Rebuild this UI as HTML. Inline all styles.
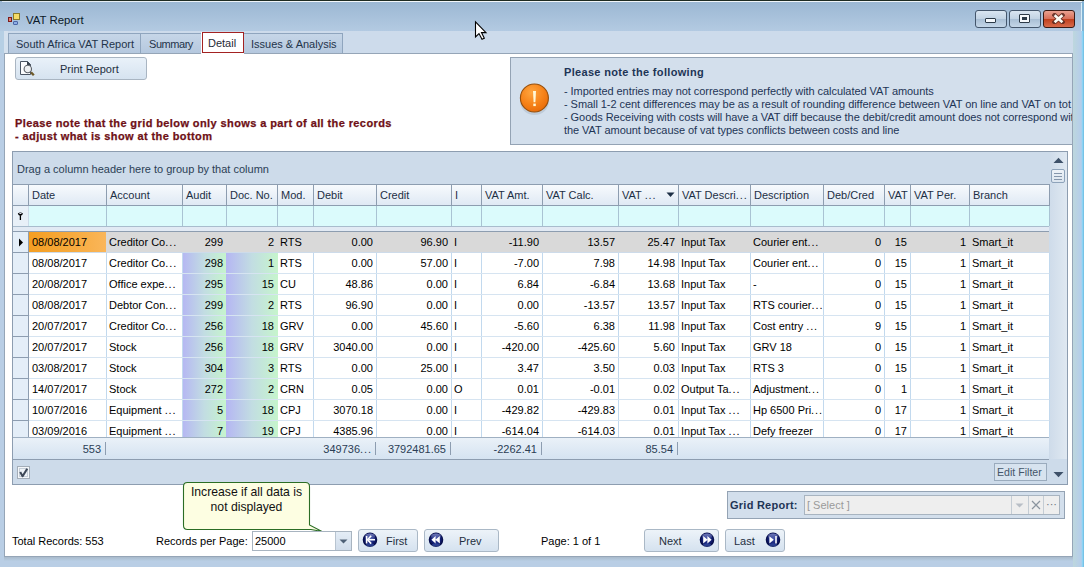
<!DOCTYPE html>
<html><head><meta charset="utf-8">
<style>
*{box-sizing:border-box;margin:0;padding:0}
html,body{width:1084px;height:567px;overflow:hidden}
body{position:relative;background:#b9cee5;font-family:"Liberation Sans",sans-serif;font-size:11px;color:#000}
.a{position:absolute}
.t{white-space:nowrap;position:absolute}
#topline{left:0;top:0;width:1084px;height:1px;background:#1e2b22}
#title{left:0;top:1px;width:1084px;height:30px;background:linear-gradient(#9bb7d3,#b3cae2)}
#tabstrip{left:0;top:31px;width:1084px;height:22px;background:#cddbeb}
.tab{top:33px;height:20px;border:1px solid #8fa5be;border-bottom:none;background:linear-gradient(#c6d6e8,#b5c8de);color:#1f344a}
.tab span{position:absolute;top:4px;white-space:nowrap}
#panel{left:4px;top:53px;width:1069px;height:504px;background:#fff;border:1px solid #95a5b7}
.nb{top:529px;height:23px;border:1px solid #aab8c6;border-radius:3px;background:linear-gradient(#edf3f9,#d5e2ef)}
.wbtn{top:10px;height:18px;border:1px solid #44566c;border-radius:3px}
</style></head><body>
<div class="a" id="topline"></div>
<div class="a" id="title"></div>
<div class="a" style="left:2px;top:1px;width:1080px;height:1px;background:linear-gradient(90deg,#dfe9f2,#f4f8fb 30%,#eef4f8)"></div>
<div class="a" id="tabstrip"></div>
<div class="a" style="left:0;top:31px;width:4px;height:22px;background:#b6cfe4"></div><div class="a" style="left:4px;top:31px;width:4px;height:22px;background:#d5e1ee"></div>
<!-- title icon -->
<div class="a" style="left:13px;top:13px;width:7px;height:7px;background:#f6dc66;border:1px solid #8a7a28"></div>
<div class="a" style="left:8px;top:17px;width:4px;height:5px;background:#e0806e;border:1px solid #7e1a1a"></div>
<div class="a" style="left:13px;top:21px;width:5px;height:4px;background:#8eaee6;border:1px solid #4a66a6;border-radius:1px"></div>
<div class="t" style="left:26px;top:14px;font-size:11.4px;color:#0c1a28">VAT Report</div>
<!-- window buttons -->
<div class="a wbtn" style="left:975px;width:32px;background:linear-gradient(#d9e5f1 0%,#c2d3e4 48%,#a9bfd5 52%,#c4d6e8 100%)"></div>
<div class="a wbtn" style="left:1009px;width:32px;background:linear-gradient(#d9e5f1 0%,#c2d3e4 48%,#a9bfd5 52%,#c4d6e8 100%)"></div>
<div class="a wbtn" style="left:1043px;width:32px;border-color:#3a1a14;background:linear-gradient(#e9a190 0%,#d8705a 48%,#c0401e 52%,#d86a4a 100%)"></div>
<div class="a" style="left:985px;top:18px;width:11px;height:5px;background:#f4f8fc;border:1px solid #2c3a48;border-radius:1px"></div>
<div class="a" style="left:1019px;top:14px;width:11px;height:9px;background:#f4f8fc;border:1px solid #2c3a48;border-radius:1px"></div>
<div class="a" style="left:1022px;top:17px;width:5px;height:3px;background:#2c3a48"></div>
<svg class="a" style="left:1052px;top:13px" width="13" height="11" viewBox="0 0 13 11"><path d="M2.6 2.2 L10.4 9.2 M10.4 2.2 L2.6 9.2" stroke="#5a2a20" stroke-width="4.4" stroke-linecap="square" opacity="0.85"/><path d="M2.6 2.2 L10.4 9.2 M10.4 2.2 L2.6 9.2" stroke="#fbfbf4" stroke-width="2.6"/></svg>
<div class="a" style="left:1081px;top:3px;width:1px;height:28px;background:#d8eef8"></div><div class="a" style="left:1082px;top:2px;width:2px;height:29px;background:#7fb2d4"></div>
<!-- cursor -->
<svg class="a" style="left:474px;top:20px" width="14" height="21" viewBox="0 0 14 21"><path d="M1.5 1.8 L1.5 17 L5 13.6 L8 19.2 L10.3 18.2 L7.5 12.6 L12 12.6 Z" fill="#fff" stroke="#000" stroke-width="1.1" stroke-linejoin="miter"/></svg>

<!-- tabs -->
<div class="a tab" style="left:8px;width:133px"><span style="left:7px">South Africa VAT Report</span></div>
<div class="a tab" style="left:140px;width:62px"><span style="left:8px;letter-spacing:-0.45px">Summary</span></div>
<div class="a tab" style="left:243px;width:100px"><span style="left:7px">Issues &amp; Analysis</span></div>

<div class="a" id="panel"></div>
<div class="a" style="left:4px;top:557px;width:1069px;height:4px;background:linear-gradient(#a9bacb,#b8cee4)"></div>
<div class="a" style="left:1073px;top:31px;width:11px;height:536px;background:linear-gradient(90deg,#bdd7dd,#b8d0e6 50%,#b4cdea 75%,#8fd6f6 85%,#6cb9e0)"></div>
<div class="a" style="left:201px;top:32px;width:43px;height:22px;background:#fff"></div><div class="a" style="left:202px;top:32px;width:42px;height:21px;background:#fff;border:1px solid #a32222"><span class="t" style="left:5px;top:4px;color:#1f2a36">Detail</span></div>

<!-- print report button -->
<div class="a" style="left:15px;top:57px;width:132px;height:23px;border:1px solid #a9b5c2;border-radius:3px;background:linear-gradient(#e9f1f9,#d6e3f0)"></div>
<svg class="a" style="left:19px;top:60px" width="16" height="17" viewBox="0 0 16 17">
<path d="M1.5 1.5 H8.5 L11.5 4.5 V14.5 H1.5 Z" fill="#fbfcfe" stroke="#4a5462" stroke-width="1"/>
<path d="M8 1 L12 5 H8 Z" fill="#38424e"/>
<path d="M12 12.2 L14.8 15.2" stroke="#6e5a2a" stroke-width="2.4"/>
<circle cx="8.8" cy="9" r="3.7" fill="#eef0f2" stroke="#5a5f66" stroke-width="1.1"/>
</svg>
<div class="t" style="left:60px;top:63px;color:#1f2f40">Print Report</div>
<!-- red notice -->
<div class="t" style="left:15px;top:117px;font-weight:bold;font-size:11px;letter-spacing:0.4px;line-height:13px;color:#6e1016;-webkit-text-stroke:0.25px #6e1016">Please note that the grid below only shows a part of all the records<br>- adjust what is show at the bottom</div>
<!-- notes box -->
<div class="a" style="left:0;top:0;width:1072px;height:200px;overflow:hidden">
<div class="a" style="left:510px;top:57px;width:580px;height:88px;background:#d3dfec;border:1px solid #94a3b4"></div>
<svg class="a" style="left:518px;top:82px" width="34" height="36" viewBox="0 0 34 36">
<defs><radialGradient id="og" cx="40%" cy="30%" r="75%"><stop offset="0" stop-color="#ffa640"/><stop offset="0.55" stop-color="#f7841a"/><stop offset="1" stop-color="#e86a08"/></radialGradient></defs>
<ellipse cx="16.5" cy="19" rx="14.5" ry="14" fill="#8a98a8" opacity="0.28"/>
<circle cx="16.4" cy="16" r="14" fill="url(#og)" stroke="#95500e" stroke-width="1.1"/>
<path d="M15 9 H18 L17.4 20.2 H15.6 Z" fill="#fff8d8"/>
<rect x="15.3" y="21.6" width="2.5" height="2.5" fill="#fff8d8"/>
</svg>
<div class="t" style="left:564px;top:66px;font-weight:bold;font-size:11px;letter-spacing:0.32px;color:#1e3556">Please note the following</div>
<div class="t" style="left:564px;top:85px;line-height:12.9px;letter-spacing:-0.06px;color:#1e3556">- Imported entries may not correspond perfectly with calculated VAT amounts<br>- Small 1-2 cent differences may be as a result of rounding difference between VAT on line and VAT on tot<br>- Goods Receiving with costs will have a VAT diff because the debit/credit amount does not correspond wit<br>the VAT amount because of vat types conflicts between costs and line</div>
</div>

<div class="a" style="left:12px;top:151px;width:1056px;height:334px;background:#cddbea;border:1px solid #8d9db0"></div>
<div class="t" style="left:17px;top:163px;color:#2b3e55">Drag a column header here to group by that column</div>
<div class="a" style="left:1050px;top:152px;width:17px;height:307px;background:linear-gradient(90deg,#cfdcea,#dfe8f1)"></div>
<svg class="a" style="left:1053px;top:157px" width="11" height="7"><path d="M0.5 6 L5.5 0.8 L10.5 6 Z" fill="#3e5169"/></svg>
<div class="a" style="left:1051px;top:169px;width:14px;height:14px;border:1px solid #8ea3ba;border-radius:2px;background:linear-gradient(#eef3f8,#dbe5ef)"></div>
<div class="a" style="left:1054px;top:173px;width:8px;height:1px;background:#8596ab"></div>
<div class="a" style="left:1054px;top:176px;width:8px;height:1px;background:#8596ab"></div>
<div class="a" style="left:1054px;top:179px;width:8px;height:1px;background:#8596ab"></div>
<svg class="a" style="left:1053px;top:471px" width="11" height="7"><path d="M0.5 1 L5.5 6.2 L10.5 1 Z" fill="#3e5169"/></svg>
<div class="a" style="left:13px;top:184px;width:1037px;height:22px;background:linear-gradient(#f7fafd,#dfe9f4);border-top:1px solid #8d9db0;border-bottom:1px solid #8d9db0"></div>
<div class="a" style="left:28px;top:184px;width:1px;height:22px;background:#8d9db0"></div>
<div class="a" style="left:106px;top:184px;width:1px;height:22px;background:#8d9db0"></div>
<div class="t" style="left:32px;top:189px;color:#1d2f45">Date</div>
<div class="a" style="left:182px;top:184px;width:1px;height:22px;background:#8d9db0"></div>
<div class="t" style="left:110px;top:189px;color:#1d2f45">Account</div>
<div class="a" style="left:226px;top:184px;width:1px;height:22px;background:#8d9db0"></div>
<div class="t" style="left:186px;top:189px;color:#1d2f45">Audit</div>
<div class="a" style="left:277px;top:184px;width:1px;height:22px;background:#8d9db0"></div>
<div class="t" style="left:230px;top:189px;color:#1d2f45">Doc. No.</div>
<div class="a" style="left:313px;top:184px;width:1px;height:22px;background:#8d9db0"></div>
<div class="t" style="left:281px;top:189px;color:#1d2f45">Mod.</div>
<div class="a" style="left:376px;top:184px;width:1px;height:22px;background:#8d9db0"></div>
<div class="t" style="left:317px;top:189px;color:#1d2f45">Debit</div>
<div class="a" style="left:451px;top:184px;width:1px;height:22px;background:#8d9db0"></div>
<div class="t" style="left:380px;top:189px;color:#1d2f45">Credit</div>
<div class="a" style="left:481px;top:184px;width:1px;height:22px;background:#8d9db0"></div>
<div class="t" style="left:455px;top:189px;color:#1d2f45">I</div>
<div class="a" style="left:542px;top:184px;width:1px;height:22px;background:#8d9db0"></div>
<div class="t" style="left:485px;top:189px;color:#1d2f45">VAT Amt.</div>
<div class="a" style="left:618px;top:184px;width:1px;height:22px;background:#8d9db0"></div>
<div class="t" style="left:546px;top:189px;color:#1d2f45">VAT Calc.</div>
<div class="a" style="left:678px;top:184px;width:1px;height:22px;background:#8d9db0"></div>
<div class="t" style="left:622px;top:189px;color:#1d2f45">VAT <span style="letter-spacing:0.9px">..</span>.</div>
<div class="a" style="left:750px;top:184px;width:1px;height:22px;background:#8d9db0"></div>
<div class="t" style="left:682px;top:189px;color:#1d2f45">VAT Descri<span style="letter-spacing:0.9px">..</span>.</div>
<div class="a" style="left:823px;top:184px;width:1px;height:22px;background:#8d9db0"></div>
<div class="t" style="left:754px;top:189px;color:#1d2f45">Description</div>
<div class="a" style="left:884px;top:184px;width:1px;height:22px;background:#8d9db0"></div>
<div class="t" style="left:827px;top:189px;color:#1d2f45">Deb/Cred</div>
<div class="a" style="left:910px;top:184px;width:1px;height:22px;background:#8d9db0"></div>
<div class="t" style="left:888px;top:189px;color:#1d2f45">VAT</div>
<div class="a" style="left:969px;top:184px;width:1px;height:22px;background:#8d9db0"></div>
<div class="t" style="left:914px;top:189px;color:#1d2f45">VAT Per.</div>
<div class="a" style="left:1049px;top:184px;width:1px;height:22px;background:#8d9db0"></div>
<div class="t" style="left:973px;top:189px;color:#1d2f45">Branch</div>
<svg class="a" style="left:666px;top:192px" width="9" height="6"><path d="M0.5 0.5 L8.5 0.5 L4.5 5 Z" fill="#1d2f45"/></svg>
<div class="a" style="left:29px;top:206px;width:1020px;height:20px;background:#dbfbfc"></div>
<div class="a" style="left:13px;top:206px;width:15px;height:20px;background:#e8f0f8"></div>
<div class="a" style="left:13px;top:226px;width:1036px;height:1px;background:#a9bccd"></div>
<div class="a" style="left:106px;top:206px;width:1px;height:20px;background:#a9c3d3"></div>
<div class="a" style="left:182px;top:206px;width:1px;height:20px;background:#a9c3d3"></div>
<div class="a" style="left:226px;top:206px;width:1px;height:20px;background:#a9c3d3"></div>
<div class="a" style="left:277px;top:206px;width:1px;height:20px;background:#a9c3d3"></div>
<div class="a" style="left:313px;top:206px;width:1px;height:20px;background:#a9c3d3"></div>
<div class="a" style="left:376px;top:206px;width:1px;height:20px;background:#a9c3d3"></div>
<div class="a" style="left:451px;top:206px;width:1px;height:20px;background:#a9c3d3"></div>
<div class="a" style="left:481px;top:206px;width:1px;height:20px;background:#a9c3d3"></div>
<div class="a" style="left:542px;top:206px;width:1px;height:20px;background:#a9c3d3"></div>
<div class="a" style="left:618px;top:206px;width:1px;height:20px;background:#a9c3d3"></div>
<div class="a" style="left:678px;top:206px;width:1px;height:20px;background:#a9c3d3"></div>
<div class="a" style="left:750px;top:206px;width:1px;height:20px;background:#a9c3d3"></div>
<div class="a" style="left:823px;top:206px;width:1px;height:20px;background:#a9c3d3"></div>
<div class="a" style="left:884px;top:206px;width:1px;height:20px;background:#a9c3d3"></div>
<div class="a" style="left:910px;top:206px;width:1px;height:20px;background:#a9c3d3"></div>
<div class="a" style="left:969px;top:206px;width:1px;height:20px;background:#a9c3d3"></div>
<div class="a" style="left:1049px;top:206px;width:1px;height:20px;background:#a9c3d3"></div>
<svg class="a" style="left:16px;top:210px" width="9" height="12"><path d="M1.8 3.6 Q4.4 1.2 7 3.6 Q6.6 5.6 4.4 5.9 Q2.2 5.6 1.8 3.6 Z" fill="#000"/><ellipse cx="4.4" cy="3.5" rx="1.3" ry="0.6" fill="#eef"/><rect x="3.75" y="5.5" width="1.3" height="4.5" fill="#000"/></svg>
<div class="a" style="left:13px;top:227px;width:1036px;height:4px;background:#e2eaf4"></div>
<div class="a" style="left:13px;top:231px;width:1036px;height:1px;background:#8d9db0"></div>
<div class="a" style="left:0;top:0;width:1084px;height:437px;overflow:hidden">
<div class="a" style="left:13px;top:232px;width:15px;height:21px;background:#e4eef8;border-bottom:1px solid #8d9db0"></div>
<div class="a" style="left:28px;top:232px;width:1px;height:21px;background:#8d9db0"></div>
<div class="a" style="left:29px;top:232px;width:1020px;height:20px;background:#d9d9d9"></div>
<div class="a" style="left:29px;top:232px;width:77px;height:20px;background:linear-gradient(90deg,#f49e22,#f7ab40 60%,#fab65a)"></div>
<svg class="a" style="left:18px;top:238px" width="6" height="9"><path d="M1 0.5 L5 4.5 L1 8.5 Z" fill="#000"/></svg>
<div class="t" style="left:32px;top:236px">08/08/2017</div>
<div class="t" style="left:109px;top:236px">Creditor Co<span style="letter-spacing:0.9px">..</span>.</div>
<div class="t" style="right:861px;top:236px">299</div>
<div class="t" style="right:810px;top:236px">2</div>
<div class="t" style="left:280px;top:236px">RTS</div>
<div class="t" style="right:711px;top:236px">0.00</div>
<div class="t" style="right:636px;top:236px">96.90</div>
<div class="t" style="left:454px;top:236px">I</div>
<div class="t" style="right:545px;top:236px">-11.90</div>
<div class="t" style="right:469px;top:236px">13.57</div>
<div class="t" style="right:409px;top:236px">25.47</div>
<div class="t" style="left:681px;top:236px">Input Tax</div>
<div class="t" style="left:753px;top:236px">Courier ent<span style="letter-spacing:0.9px">..</span>.</div>
<div class="t" style="right:203px;top:236px">0</div>
<div class="t" style="right:177px;top:236px">15</div>
<div class="t" style="right:118px;top:236px">1</div>
<div class="t" style="left:972px;top:236px">Smart_it</div>
<div class="a" style="left:13px;top:253px;width:15px;height:21px;background:#e4eef8;border-bottom:1px solid #8d9db0"></div>
<div class="a" style="left:28px;top:253px;width:1px;height:21px;background:#8d9db0"></div>
<div class="a" style="left:29px;top:253px;width:1020px;height:20px;background:#ffffff"></div>
<div class="a" style="left:182px;top:253px;width:45px;height:20px;background:linear-gradient(90deg,#b5b6f3,#c2dde2 50%,#c6f5cc)"></div>
<div class="a" style="left:226px;top:253px;width:52px;height:20px;background:linear-gradient(90deg,#b5b6f3,#c2dde2 50%,#c6f5cc)"></div>
<div class="a" style="left:106px;top:253px;width:1px;height:20px;background:#c2d9ee"></div>
<div class="a" style="left:182px;top:253px;width:1px;height:20px;background:#c2d9ee"></div>
<div class="a" style="left:313px;top:253px;width:1px;height:20px;background:#c2d9ee"></div>
<div class="a" style="left:376px;top:253px;width:1px;height:20px;background:#c2d9ee"></div>
<div class="a" style="left:451px;top:253px;width:1px;height:20px;background:#c2d9ee"></div>
<div class="a" style="left:481px;top:253px;width:1px;height:20px;background:#c2d9ee"></div>
<div class="a" style="left:542px;top:253px;width:1px;height:20px;background:#c2d9ee"></div>
<div class="a" style="left:618px;top:253px;width:1px;height:20px;background:#c2d9ee"></div>
<div class="a" style="left:678px;top:253px;width:1px;height:20px;background:#c2d9ee"></div>
<div class="a" style="left:750px;top:253px;width:1px;height:20px;background:#c2d9ee"></div>
<div class="a" style="left:823px;top:253px;width:1px;height:20px;background:#c2d9ee"></div>
<div class="a" style="left:884px;top:253px;width:1px;height:20px;background:#c2d9ee"></div>
<div class="a" style="left:910px;top:253px;width:1px;height:20px;background:#c2d9ee"></div>
<div class="a" style="left:969px;top:253px;width:1px;height:20px;background:#c2d9ee"></div>
<div class="a" style="left:1049px;top:253px;width:1px;height:20px;background:#c2d9ee"></div>
<div class="a" style="left:29px;top:273px;width:1020px;height:1px;background:#d6e4f1"></div>
<div class="t" style="left:32px;top:257px">08/08/2017</div>
<div class="t" style="left:109px;top:257px">Creditor Co<span style="letter-spacing:0.9px">..</span>.</div>
<div class="t" style="right:861px;top:257px">298</div>
<div class="t" style="right:810px;top:257px">1</div>
<div class="t" style="left:280px;top:257px">RTS</div>
<div class="t" style="right:711px;top:257px">0.00</div>
<div class="t" style="right:636px;top:257px">57.00</div>
<div class="t" style="left:454px;top:257px">I</div>
<div class="t" style="right:545px;top:257px">-7.00</div>
<div class="t" style="right:469px;top:257px">7.98</div>
<div class="t" style="right:409px;top:257px">14.98</div>
<div class="t" style="left:681px;top:257px">Input Tax</div>
<div class="t" style="left:753px;top:257px">Courier ent<span style="letter-spacing:0.9px">..</span>.</div>
<div class="t" style="right:203px;top:257px">0</div>
<div class="t" style="right:177px;top:257px">15</div>
<div class="t" style="right:118px;top:257px">1</div>
<div class="t" style="left:972px;top:257px">Smart_it</div>
<div class="a" style="left:13px;top:274px;width:15px;height:21px;background:#e4eef8;border-bottom:1px solid #8d9db0"></div>
<div class="a" style="left:28px;top:274px;width:1px;height:21px;background:#8d9db0"></div>
<div class="a" style="left:29px;top:274px;width:1020px;height:20px;background:#ffffff"></div>
<div class="a" style="left:182px;top:274px;width:45px;height:20px;background:linear-gradient(90deg,#b5b6f3,#c2dde2 50%,#c6f5cc)"></div>
<div class="a" style="left:226px;top:274px;width:52px;height:20px;background:linear-gradient(90deg,#b5b6f3,#c2dde2 50%,#c6f5cc)"></div>
<div class="a" style="left:106px;top:274px;width:1px;height:20px;background:#c2d9ee"></div>
<div class="a" style="left:182px;top:274px;width:1px;height:20px;background:#c2d9ee"></div>
<div class="a" style="left:313px;top:274px;width:1px;height:20px;background:#c2d9ee"></div>
<div class="a" style="left:376px;top:274px;width:1px;height:20px;background:#c2d9ee"></div>
<div class="a" style="left:451px;top:274px;width:1px;height:20px;background:#c2d9ee"></div>
<div class="a" style="left:481px;top:274px;width:1px;height:20px;background:#c2d9ee"></div>
<div class="a" style="left:542px;top:274px;width:1px;height:20px;background:#c2d9ee"></div>
<div class="a" style="left:618px;top:274px;width:1px;height:20px;background:#c2d9ee"></div>
<div class="a" style="left:678px;top:274px;width:1px;height:20px;background:#c2d9ee"></div>
<div class="a" style="left:750px;top:274px;width:1px;height:20px;background:#c2d9ee"></div>
<div class="a" style="left:823px;top:274px;width:1px;height:20px;background:#c2d9ee"></div>
<div class="a" style="left:884px;top:274px;width:1px;height:20px;background:#c2d9ee"></div>
<div class="a" style="left:910px;top:274px;width:1px;height:20px;background:#c2d9ee"></div>
<div class="a" style="left:969px;top:274px;width:1px;height:20px;background:#c2d9ee"></div>
<div class="a" style="left:1049px;top:274px;width:1px;height:20px;background:#c2d9ee"></div>
<div class="a" style="left:29px;top:294px;width:1020px;height:1px;background:#d6e4f1"></div>
<div class="t" style="left:32px;top:278px">20/08/2017</div>
<div class="t" style="left:109px;top:278px">Office expe<span style="letter-spacing:0.9px">..</span>.</div>
<div class="t" style="right:861px;top:278px">295</div>
<div class="t" style="right:810px;top:278px">15</div>
<div class="t" style="left:280px;top:278px">CU</div>
<div class="t" style="right:711px;top:278px">48.86</div>
<div class="t" style="right:636px;top:278px">0.00</div>
<div class="t" style="left:454px;top:278px">I</div>
<div class="t" style="right:545px;top:278px">6.84</div>
<div class="t" style="right:469px;top:278px">-6.84</div>
<div class="t" style="right:409px;top:278px">13.68</div>
<div class="t" style="left:681px;top:278px">Input Tax</div>
<div class="t" style="left:753px;top:278px">-</div>
<div class="t" style="right:203px;top:278px">0</div>
<div class="t" style="right:177px;top:278px">15</div>
<div class="t" style="right:118px;top:278px">1</div>
<div class="t" style="left:972px;top:278px">Smart_it</div>
<div class="a" style="left:13px;top:295px;width:15px;height:21px;background:#e4eef8;border-bottom:1px solid #8d9db0"></div>
<div class="a" style="left:28px;top:295px;width:1px;height:21px;background:#8d9db0"></div>
<div class="a" style="left:29px;top:295px;width:1020px;height:20px;background:#ffffff"></div>
<div class="a" style="left:182px;top:295px;width:45px;height:20px;background:linear-gradient(90deg,#b5b6f3,#c2dde2 50%,#c6f5cc)"></div>
<div class="a" style="left:226px;top:295px;width:52px;height:20px;background:linear-gradient(90deg,#b5b6f3,#c2dde2 50%,#c6f5cc)"></div>
<div class="a" style="left:106px;top:295px;width:1px;height:20px;background:#c2d9ee"></div>
<div class="a" style="left:182px;top:295px;width:1px;height:20px;background:#c2d9ee"></div>
<div class="a" style="left:313px;top:295px;width:1px;height:20px;background:#c2d9ee"></div>
<div class="a" style="left:376px;top:295px;width:1px;height:20px;background:#c2d9ee"></div>
<div class="a" style="left:451px;top:295px;width:1px;height:20px;background:#c2d9ee"></div>
<div class="a" style="left:481px;top:295px;width:1px;height:20px;background:#c2d9ee"></div>
<div class="a" style="left:542px;top:295px;width:1px;height:20px;background:#c2d9ee"></div>
<div class="a" style="left:618px;top:295px;width:1px;height:20px;background:#c2d9ee"></div>
<div class="a" style="left:678px;top:295px;width:1px;height:20px;background:#c2d9ee"></div>
<div class="a" style="left:750px;top:295px;width:1px;height:20px;background:#c2d9ee"></div>
<div class="a" style="left:823px;top:295px;width:1px;height:20px;background:#c2d9ee"></div>
<div class="a" style="left:884px;top:295px;width:1px;height:20px;background:#c2d9ee"></div>
<div class="a" style="left:910px;top:295px;width:1px;height:20px;background:#c2d9ee"></div>
<div class="a" style="left:969px;top:295px;width:1px;height:20px;background:#c2d9ee"></div>
<div class="a" style="left:1049px;top:295px;width:1px;height:20px;background:#c2d9ee"></div>
<div class="a" style="left:29px;top:315px;width:1020px;height:1px;background:#d6e4f1"></div>
<div class="t" style="left:32px;top:299px">08/08/2017</div>
<div class="t" style="left:109px;top:299px">Debtor Con<span style="letter-spacing:0.9px">..</span>.</div>
<div class="t" style="right:861px;top:299px">299</div>
<div class="t" style="right:810px;top:299px">2</div>
<div class="t" style="left:280px;top:299px">RTS</div>
<div class="t" style="right:711px;top:299px">96.90</div>
<div class="t" style="right:636px;top:299px">0.00</div>
<div class="t" style="left:454px;top:299px">I</div>
<div class="t" style="right:545px;top:299px">0.00</div>
<div class="t" style="right:469px;top:299px">-13.57</div>
<div class="t" style="right:409px;top:299px">13.57</div>
<div class="t" style="left:681px;top:299px">Input Tax</div>
<div class="t" style="left:753px;top:299px">RTS courier<span style="letter-spacing:0.9px">..</span>.</div>
<div class="t" style="right:203px;top:299px">0</div>
<div class="t" style="right:177px;top:299px">15</div>
<div class="t" style="right:118px;top:299px">1</div>
<div class="t" style="left:972px;top:299px">Smart_it</div>
<div class="a" style="left:13px;top:316px;width:15px;height:21px;background:#e4eef8;border-bottom:1px solid #8d9db0"></div>
<div class="a" style="left:28px;top:316px;width:1px;height:21px;background:#8d9db0"></div>
<div class="a" style="left:29px;top:316px;width:1020px;height:20px;background:#ffffff"></div>
<div class="a" style="left:182px;top:316px;width:45px;height:20px;background:linear-gradient(90deg,#b5b6f3,#c2dde2 50%,#c6f5cc)"></div>
<div class="a" style="left:226px;top:316px;width:52px;height:20px;background:linear-gradient(90deg,#b5b6f3,#c2dde2 50%,#c6f5cc)"></div>
<div class="a" style="left:106px;top:316px;width:1px;height:20px;background:#c2d9ee"></div>
<div class="a" style="left:182px;top:316px;width:1px;height:20px;background:#c2d9ee"></div>
<div class="a" style="left:313px;top:316px;width:1px;height:20px;background:#c2d9ee"></div>
<div class="a" style="left:376px;top:316px;width:1px;height:20px;background:#c2d9ee"></div>
<div class="a" style="left:451px;top:316px;width:1px;height:20px;background:#c2d9ee"></div>
<div class="a" style="left:481px;top:316px;width:1px;height:20px;background:#c2d9ee"></div>
<div class="a" style="left:542px;top:316px;width:1px;height:20px;background:#c2d9ee"></div>
<div class="a" style="left:618px;top:316px;width:1px;height:20px;background:#c2d9ee"></div>
<div class="a" style="left:678px;top:316px;width:1px;height:20px;background:#c2d9ee"></div>
<div class="a" style="left:750px;top:316px;width:1px;height:20px;background:#c2d9ee"></div>
<div class="a" style="left:823px;top:316px;width:1px;height:20px;background:#c2d9ee"></div>
<div class="a" style="left:884px;top:316px;width:1px;height:20px;background:#c2d9ee"></div>
<div class="a" style="left:910px;top:316px;width:1px;height:20px;background:#c2d9ee"></div>
<div class="a" style="left:969px;top:316px;width:1px;height:20px;background:#c2d9ee"></div>
<div class="a" style="left:1049px;top:316px;width:1px;height:20px;background:#c2d9ee"></div>
<div class="a" style="left:29px;top:336px;width:1020px;height:1px;background:#d6e4f1"></div>
<div class="t" style="left:32px;top:320px">20/07/2017</div>
<div class="t" style="left:109px;top:320px">Creditor Co<span style="letter-spacing:0.9px">..</span>.</div>
<div class="t" style="right:861px;top:320px">256</div>
<div class="t" style="right:810px;top:320px">18</div>
<div class="t" style="left:280px;top:320px">GRV</div>
<div class="t" style="right:711px;top:320px">0.00</div>
<div class="t" style="right:636px;top:320px">45.60</div>
<div class="t" style="left:454px;top:320px">I</div>
<div class="t" style="right:545px;top:320px">-5.60</div>
<div class="t" style="right:469px;top:320px">6.38</div>
<div class="t" style="right:409px;top:320px">11.98</div>
<div class="t" style="left:681px;top:320px">Input Tax</div>
<div class="t" style="left:753px;top:320px">Cost entry <span style="letter-spacing:0.9px">..</span>.</div>
<div class="t" style="right:203px;top:320px">9</div>
<div class="t" style="right:177px;top:320px">15</div>
<div class="t" style="right:118px;top:320px">1</div>
<div class="t" style="left:972px;top:320px">Smart_it</div>
<div class="a" style="left:13px;top:337px;width:15px;height:21px;background:#e4eef8;border-bottom:1px solid #8d9db0"></div>
<div class="a" style="left:28px;top:337px;width:1px;height:21px;background:#8d9db0"></div>
<div class="a" style="left:29px;top:337px;width:1020px;height:20px;background:#ffffff"></div>
<div class="a" style="left:182px;top:337px;width:45px;height:20px;background:linear-gradient(90deg,#b5b6f3,#c2dde2 50%,#c6f5cc)"></div>
<div class="a" style="left:226px;top:337px;width:52px;height:20px;background:linear-gradient(90deg,#b5b6f3,#c2dde2 50%,#c6f5cc)"></div>
<div class="a" style="left:106px;top:337px;width:1px;height:20px;background:#c2d9ee"></div>
<div class="a" style="left:182px;top:337px;width:1px;height:20px;background:#c2d9ee"></div>
<div class="a" style="left:313px;top:337px;width:1px;height:20px;background:#c2d9ee"></div>
<div class="a" style="left:376px;top:337px;width:1px;height:20px;background:#c2d9ee"></div>
<div class="a" style="left:451px;top:337px;width:1px;height:20px;background:#c2d9ee"></div>
<div class="a" style="left:481px;top:337px;width:1px;height:20px;background:#c2d9ee"></div>
<div class="a" style="left:542px;top:337px;width:1px;height:20px;background:#c2d9ee"></div>
<div class="a" style="left:618px;top:337px;width:1px;height:20px;background:#c2d9ee"></div>
<div class="a" style="left:678px;top:337px;width:1px;height:20px;background:#c2d9ee"></div>
<div class="a" style="left:750px;top:337px;width:1px;height:20px;background:#c2d9ee"></div>
<div class="a" style="left:823px;top:337px;width:1px;height:20px;background:#c2d9ee"></div>
<div class="a" style="left:884px;top:337px;width:1px;height:20px;background:#c2d9ee"></div>
<div class="a" style="left:910px;top:337px;width:1px;height:20px;background:#c2d9ee"></div>
<div class="a" style="left:969px;top:337px;width:1px;height:20px;background:#c2d9ee"></div>
<div class="a" style="left:1049px;top:337px;width:1px;height:20px;background:#c2d9ee"></div>
<div class="a" style="left:29px;top:357px;width:1020px;height:1px;background:#d6e4f1"></div>
<div class="t" style="left:32px;top:341px">20/07/2017</div>
<div class="t" style="left:109px;top:341px">Stock</div>
<div class="t" style="right:861px;top:341px">256</div>
<div class="t" style="right:810px;top:341px">18</div>
<div class="t" style="left:280px;top:341px">GRV</div>
<div class="t" style="right:711px;top:341px">3040.00</div>
<div class="t" style="right:636px;top:341px">0.00</div>
<div class="t" style="left:454px;top:341px">I</div>
<div class="t" style="right:545px;top:341px">-420.00</div>
<div class="t" style="right:469px;top:341px">-425.60</div>
<div class="t" style="right:409px;top:341px">5.60</div>
<div class="t" style="left:681px;top:341px">Input Tax</div>
<div class="t" style="left:753px;top:341px">GRV 18</div>
<div class="t" style="right:203px;top:341px">0</div>
<div class="t" style="right:177px;top:341px">15</div>
<div class="t" style="right:118px;top:341px">1</div>
<div class="t" style="left:972px;top:341px">Smart_it</div>
<div class="a" style="left:13px;top:358px;width:15px;height:21px;background:#e4eef8;border-bottom:1px solid #8d9db0"></div>
<div class="a" style="left:28px;top:358px;width:1px;height:21px;background:#8d9db0"></div>
<div class="a" style="left:29px;top:358px;width:1020px;height:20px;background:#ffffff"></div>
<div class="a" style="left:182px;top:358px;width:45px;height:20px;background:linear-gradient(90deg,#b5b6f3,#c2dde2 50%,#c6f5cc)"></div>
<div class="a" style="left:226px;top:358px;width:52px;height:20px;background:linear-gradient(90deg,#b5b6f3,#c2dde2 50%,#c6f5cc)"></div>
<div class="a" style="left:106px;top:358px;width:1px;height:20px;background:#c2d9ee"></div>
<div class="a" style="left:182px;top:358px;width:1px;height:20px;background:#c2d9ee"></div>
<div class="a" style="left:313px;top:358px;width:1px;height:20px;background:#c2d9ee"></div>
<div class="a" style="left:376px;top:358px;width:1px;height:20px;background:#c2d9ee"></div>
<div class="a" style="left:451px;top:358px;width:1px;height:20px;background:#c2d9ee"></div>
<div class="a" style="left:481px;top:358px;width:1px;height:20px;background:#c2d9ee"></div>
<div class="a" style="left:542px;top:358px;width:1px;height:20px;background:#c2d9ee"></div>
<div class="a" style="left:618px;top:358px;width:1px;height:20px;background:#c2d9ee"></div>
<div class="a" style="left:678px;top:358px;width:1px;height:20px;background:#c2d9ee"></div>
<div class="a" style="left:750px;top:358px;width:1px;height:20px;background:#c2d9ee"></div>
<div class="a" style="left:823px;top:358px;width:1px;height:20px;background:#c2d9ee"></div>
<div class="a" style="left:884px;top:358px;width:1px;height:20px;background:#c2d9ee"></div>
<div class="a" style="left:910px;top:358px;width:1px;height:20px;background:#c2d9ee"></div>
<div class="a" style="left:969px;top:358px;width:1px;height:20px;background:#c2d9ee"></div>
<div class="a" style="left:1049px;top:358px;width:1px;height:20px;background:#c2d9ee"></div>
<div class="a" style="left:29px;top:378px;width:1020px;height:1px;background:#d6e4f1"></div>
<div class="t" style="left:32px;top:362px">03/08/2017</div>
<div class="t" style="left:109px;top:362px">Stock</div>
<div class="t" style="right:861px;top:362px">304</div>
<div class="t" style="right:810px;top:362px">3</div>
<div class="t" style="left:280px;top:362px">RTS</div>
<div class="t" style="right:711px;top:362px">0.00</div>
<div class="t" style="right:636px;top:362px">25.00</div>
<div class="t" style="left:454px;top:362px">I</div>
<div class="t" style="right:545px;top:362px">3.47</div>
<div class="t" style="right:469px;top:362px">3.50</div>
<div class="t" style="right:409px;top:362px">0.03</div>
<div class="t" style="left:681px;top:362px">Input Tax</div>
<div class="t" style="left:753px;top:362px">RTS 3</div>
<div class="t" style="right:203px;top:362px">0</div>
<div class="t" style="right:177px;top:362px">15</div>
<div class="t" style="right:118px;top:362px">1</div>
<div class="t" style="left:972px;top:362px">Smart_it</div>
<div class="a" style="left:13px;top:379px;width:15px;height:21px;background:#e4eef8;border-bottom:1px solid #8d9db0"></div>
<div class="a" style="left:28px;top:379px;width:1px;height:21px;background:#8d9db0"></div>
<div class="a" style="left:29px;top:379px;width:1020px;height:20px;background:#ffffff"></div>
<div class="a" style="left:182px;top:379px;width:45px;height:20px;background:linear-gradient(90deg,#b5b6f3,#c2dde2 50%,#c6f5cc)"></div>
<div class="a" style="left:226px;top:379px;width:52px;height:20px;background:linear-gradient(90deg,#b5b6f3,#c2dde2 50%,#c6f5cc)"></div>
<div class="a" style="left:106px;top:379px;width:1px;height:20px;background:#c2d9ee"></div>
<div class="a" style="left:182px;top:379px;width:1px;height:20px;background:#c2d9ee"></div>
<div class="a" style="left:313px;top:379px;width:1px;height:20px;background:#c2d9ee"></div>
<div class="a" style="left:376px;top:379px;width:1px;height:20px;background:#c2d9ee"></div>
<div class="a" style="left:451px;top:379px;width:1px;height:20px;background:#c2d9ee"></div>
<div class="a" style="left:481px;top:379px;width:1px;height:20px;background:#c2d9ee"></div>
<div class="a" style="left:542px;top:379px;width:1px;height:20px;background:#c2d9ee"></div>
<div class="a" style="left:618px;top:379px;width:1px;height:20px;background:#c2d9ee"></div>
<div class="a" style="left:678px;top:379px;width:1px;height:20px;background:#c2d9ee"></div>
<div class="a" style="left:750px;top:379px;width:1px;height:20px;background:#c2d9ee"></div>
<div class="a" style="left:823px;top:379px;width:1px;height:20px;background:#c2d9ee"></div>
<div class="a" style="left:884px;top:379px;width:1px;height:20px;background:#c2d9ee"></div>
<div class="a" style="left:910px;top:379px;width:1px;height:20px;background:#c2d9ee"></div>
<div class="a" style="left:969px;top:379px;width:1px;height:20px;background:#c2d9ee"></div>
<div class="a" style="left:1049px;top:379px;width:1px;height:20px;background:#c2d9ee"></div>
<div class="a" style="left:29px;top:399px;width:1020px;height:1px;background:#d6e4f1"></div>
<div class="t" style="left:32px;top:383px">14/07/2017</div>
<div class="t" style="left:109px;top:383px">Stock</div>
<div class="t" style="right:861px;top:383px">272</div>
<div class="t" style="right:810px;top:383px">2</div>
<div class="t" style="left:280px;top:383px">CRN</div>
<div class="t" style="right:711px;top:383px">0.05</div>
<div class="t" style="right:636px;top:383px">0.00</div>
<div class="t" style="left:454px;top:383px">O</div>
<div class="t" style="right:545px;top:383px">0.01</div>
<div class="t" style="right:469px;top:383px">-0.01</div>
<div class="t" style="right:409px;top:383px">0.02</div>
<div class="t" style="left:681px;top:383px">Output Ta<span style="letter-spacing:0.9px">..</span>.</div>
<div class="t" style="left:753px;top:383px">Adjustment<span style="letter-spacing:0.9px">..</span>.</div>
<div class="t" style="right:203px;top:383px">0</div>
<div class="t" style="right:177px;top:383px">1</div>
<div class="t" style="right:118px;top:383px">1</div>
<div class="t" style="left:972px;top:383px">Smart_it</div>
<div class="a" style="left:13px;top:400px;width:15px;height:21px;background:#e4eef8;border-bottom:1px solid #8d9db0"></div>
<div class="a" style="left:28px;top:400px;width:1px;height:21px;background:#8d9db0"></div>
<div class="a" style="left:29px;top:400px;width:1020px;height:20px;background:#ffffff"></div>
<div class="a" style="left:182px;top:400px;width:45px;height:20px;background:linear-gradient(90deg,#b5b6f3,#c2dde2 50%,#c6f5cc)"></div>
<div class="a" style="left:226px;top:400px;width:52px;height:20px;background:linear-gradient(90deg,#b5b6f3,#c2dde2 50%,#c6f5cc)"></div>
<div class="a" style="left:106px;top:400px;width:1px;height:20px;background:#c2d9ee"></div>
<div class="a" style="left:182px;top:400px;width:1px;height:20px;background:#c2d9ee"></div>
<div class="a" style="left:313px;top:400px;width:1px;height:20px;background:#c2d9ee"></div>
<div class="a" style="left:376px;top:400px;width:1px;height:20px;background:#c2d9ee"></div>
<div class="a" style="left:451px;top:400px;width:1px;height:20px;background:#c2d9ee"></div>
<div class="a" style="left:481px;top:400px;width:1px;height:20px;background:#c2d9ee"></div>
<div class="a" style="left:542px;top:400px;width:1px;height:20px;background:#c2d9ee"></div>
<div class="a" style="left:618px;top:400px;width:1px;height:20px;background:#c2d9ee"></div>
<div class="a" style="left:678px;top:400px;width:1px;height:20px;background:#c2d9ee"></div>
<div class="a" style="left:750px;top:400px;width:1px;height:20px;background:#c2d9ee"></div>
<div class="a" style="left:823px;top:400px;width:1px;height:20px;background:#c2d9ee"></div>
<div class="a" style="left:884px;top:400px;width:1px;height:20px;background:#c2d9ee"></div>
<div class="a" style="left:910px;top:400px;width:1px;height:20px;background:#c2d9ee"></div>
<div class="a" style="left:969px;top:400px;width:1px;height:20px;background:#c2d9ee"></div>
<div class="a" style="left:1049px;top:400px;width:1px;height:20px;background:#c2d9ee"></div>
<div class="a" style="left:29px;top:420px;width:1020px;height:1px;background:#d6e4f1"></div>
<div class="t" style="left:32px;top:404px">10/07/2016</div>
<div class="t" style="left:109px;top:404px">Equipment <span style="letter-spacing:0.9px">..</span>.</div>
<div class="t" style="right:861px;top:404px">5</div>
<div class="t" style="right:810px;top:404px">18</div>
<div class="t" style="left:280px;top:404px">CPJ</div>
<div class="t" style="right:711px;top:404px">3070.18</div>
<div class="t" style="right:636px;top:404px">0.00</div>
<div class="t" style="left:454px;top:404px">I</div>
<div class="t" style="right:545px;top:404px">-429.82</div>
<div class="t" style="right:469px;top:404px">-429.83</div>
<div class="t" style="right:409px;top:404px">0.01</div>
<div class="t" style="left:681px;top:404px">Input Tax <span style="letter-spacing:0.9px">..</span>.</div>
<div class="t" style="left:753px;top:404px">Hp 6500 Pri<span style="letter-spacing:0.9px">..</span>.</div>
<div class="t" style="right:203px;top:404px">0</div>
<div class="t" style="right:177px;top:404px">17</div>
<div class="t" style="right:118px;top:404px">1</div>
<div class="t" style="left:972px;top:404px">Smart_it</div>
<div class="a" style="left:13px;top:421px;width:15px;height:21px;background:#e4eef8;border-bottom:1px solid #8d9db0"></div>
<div class="a" style="left:28px;top:421px;width:1px;height:21px;background:#8d9db0"></div>
<div class="a" style="left:29px;top:421px;width:1020px;height:20px;background:#ffffff"></div>
<div class="a" style="left:182px;top:421px;width:45px;height:20px;background:linear-gradient(90deg,#b5b6f3,#c2dde2 50%,#c6f5cc)"></div>
<div class="a" style="left:226px;top:421px;width:52px;height:20px;background:linear-gradient(90deg,#b5b6f3,#c2dde2 50%,#c6f5cc)"></div>
<div class="a" style="left:106px;top:421px;width:1px;height:20px;background:#c2d9ee"></div>
<div class="a" style="left:182px;top:421px;width:1px;height:20px;background:#c2d9ee"></div>
<div class="a" style="left:313px;top:421px;width:1px;height:20px;background:#c2d9ee"></div>
<div class="a" style="left:376px;top:421px;width:1px;height:20px;background:#c2d9ee"></div>
<div class="a" style="left:451px;top:421px;width:1px;height:20px;background:#c2d9ee"></div>
<div class="a" style="left:481px;top:421px;width:1px;height:20px;background:#c2d9ee"></div>
<div class="a" style="left:542px;top:421px;width:1px;height:20px;background:#c2d9ee"></div>
<div class="a" style="left:618px;top:421px;width:1px;height:20px;background:#c2d9ee"></div>
<div class="a" style="left:678px;top:421px;width:1px;height:20px;background:#c2d9ee"></div>
<div class="a" style="left:750px;top:421px;width:1px;height:20px;background:#c2d9ee"></div>
<div class="a" style="left:823px;top:421px;width:1px;height:20px;background:#c2d9ee"></div>
<div class="a" style="left:884px;top:421px;width:1px;height:20px;background:#c2d9ee"></div>
<div class="a" style="left:910px;top:421px;width:1px;height:20px;background:#c2d9ee"></div>
<div class="a" style="left:969px;top:421px;width:1px;height:20px;background:#c2d9ee"></div>
<div class="a" style="left:1049px;top:421px;width:1px;height:20px;background:#c2d9ee"></div>
<div class="t" style="left:32px;top:425px">03/09/2016</div>
<div class="t" style="left:109px;top:425px">Equipment <span style="letter-spacing:0.9px">..</span>.</div>
<div class="t" style="right:861px;top:425px">7</div>
<div class="t" style="right:810px;top:425px">19</div>
<div class="t" style="left:280px;top:425px">CPJ</div>
<div class="t" style="right:711px;top:425px">4385.96</div>
<div class="t" style="right:636px;top:425px">0.00</div>
<div class="t" style="left:454px;top:425px">I</div>
<div class="t" style="right:545px;top:425px">-614.04</div>
<div class="t" style="right:469px;top:425px">-614.03</div>
<div class="t" style="right:409px;top:425px">0.01</div>
<div class="t" style="left:681px;top:425px">Input Tax <span style="letter-spacing:0.9px">..</span>.</div>
<div class="t" style="left:753px;top:425px">Defy freezer</div>
<div class="t" style="right:203px;top:425px">0</div>
<div class="t" style="right:177px;top:425px">17</div>
<div class="t" style="right:118px;top:425px">1</div>
<div class="t" style="left:972px;top:425px">Smart_it</div>
</div>
<div class="a" style="left:13px;top:437px;width:1036px;height:23px;background:linear-gradient(#eaf1f8,#d5e3f1);border-top:1px solid #9fb0c2;border-bottom:1px solid #8d9db0"></div>
<div class="t" style="right:983px;top:443px;color:#2b3e55">553</div>
<div class="a" style="left:105px;top:442px;width:1px;height:13px;background:#8d9db0"></div>
<div class="t" style="right:713px;top:443px;color:#2b3e55">349736<span style="letter-spacing:0.9px">..</span>.</div>
<div class="a" style="left:375px;top:442px;width:1px;height:13px;background:#8d9db0"></div>
<div class="t" style="right:638px;top:443px;color:#2b3e55">3792481.65</div>
<div class="a" style="left:450px;top:442px;width:1px;height:13px;background:#8d9db0"></div>
<div class="t" style="right:547px;top:443px;color:#2b3e55">-2262.41</div>
<div class="a" style="left:541px;top:442px;width:1px;height:13px;background:#8d9db0"></div>
<div class="t" style="right:411px;top:443px;color:#2b3e55">85.54</div>
<div class="a" style="left:677px;top:442px;width:1px;height:13px;background:#8d9db0"></div>
<div class="a" style="left:17px;top:466px;width:13px;height:13px;border:1px solid #a3adb8;background:#f4f7fa"></div>
<div class="a" style="left:19px;top:468px;width:9px;height:9px;border:1px solid #c5ced8;background:#eef3f8"></div>
<svg class="a" style="left:17px;top:466px" width="13" height="13"><path d="M3.2 6 L5.6 10.2 L10.2 2.8" stroke="#3e4858" stroke-width="2.1" fill="none" stroke-linejoin="round"/></svg>
<div class="a" style="left:994px;top:463px;width:53px;height:18px;border:1px solid #9aabbd;background:#d7e3ef"></div>
<div class="t" style="left:997px;top:466px;font-size:10.6px;color:#44566a">Edit Filter</div>
<!-- grid report panel -->
<div class="a" style="left:727px;top:491px;width:338px;height:28px;background:#d3dfec;border:1px solid #94a3b4"></div>
<div class="t" style="left:730px;top:499px;font-weight:bold;font-size:11px;letter-spacing:0.25px;color:#1e3556">Grid Report:</div>
<div class="a" style="left:804px;top:495px;width:256px;height:20px;background:#eeeeee;border:1px solid #a8b4c0"></div>
<div class="t" style="left:807px;top:499px;color:#9a9a9a">[ Select ]</div>
<div class="a" style="left:1011px;top:496px;width:1px;height:18px;background:#c4ccd4"></div>
<div class="a" style="left:1028px;top:496px;width:1px;height:18px;background:#c4ccd4"></div>
<div class="a" style="left:1043px;top:496px;width:1px;height:18px;background:#c4ccd4"></div>
<svg class="a" style="left:1015px;top:503px" width="9" height="5"><path d="M0.5 0.5 L8.5 0.5 L4.5 4.5 Z" fill="#b8bec6"/></svg>
<svg class="a" style="left:1031px;top:500px" width="10" height="10"><path d="M1 1 L9 9 M9 1 L1 9" stroke="#8a949e" stroke-width="1.2"/></svg>
<div class="t" style="left:1046px;top:498px;color:#6a747e;letter-spacing:0px">&middot;&middot;&middot;</div>
<!-- tooltip -->
<svg class="a" style="left:182px;top:481px" width="145" height="52" viewBox="0 0 145 52">
<path d="M5.5 1.5 H123.5 Q127.5 1.5 127.5 5.5 V44 L140 50.5 L129 48.5 H5.5 Q1.5 48.5 1.5 44.5 V5.5 Q1.5 1.5 5.5 1.5 Z" fill="#fdfee2" stroke="#2b6d25" stroke-width="1.1"/>
</svg>
<div class="t" style="left:183px;top:485px;width:127px;text-align:center;font-size:12.2px;line-height:15px;color:#111">Increase if all data is<br>not displayed</div>
<!-- bottom bar -->
<div class="t" style="left:12px;top:535px">Total Records: 553</div>
<div class="t" style="left:156px;top:535px">Records per Page:</div>
<div class="a" style="left:252px;top:531px;width:100px;height:20px;background:#fff;border:1px solid #a8b4c0"></div>
<div class="a" style="left:335px;top:532px;width:16px;height:18px;background:linear-gradient(#e4edf6,#d0dcea);border-left:1px solid #b8c4d0"></div>
<svg class="a" style="left:339px;top:539px" width="9" height="5"><path d="M0.5 0.5 L8.5 0.5 L4.5 4.5 Z" fill="#4e6076"/></svg>
<div class="t" style="left:255px;top:535px">25000</div>
<div class="a nb" style="left:358px;width:60px"></div>
<div class="a nb" style="left:424px;width:75px"></div>
<div class="a nb" style="left:644px;width:75px"></div>
<div class="a nb" style="left:725px;width:60px"></div>
<div class="t" style="left:386px;top:535px;color:#1f2f40">First</div>
<div class="t" style="left:459px;top:535px;color:#1f2f40">Prev</div>
<div class="t" style="left:541px;top:535px">Page: 1 of 1</div>
<div class="t" style="left:659px;top:535px;color:#1f2f40">Next</div>
<div class="t" style="left:734px;top:535px;color:#1f2f40">Last</div>
<svg class="a" style="left:362px;top:532px" width="16" height="16" viewBox="0 0 16 16"><defs><radialGradient id="bg1" cx="50%" cy="45%" r="55%"><stop offset="0" stop-color="#3c4ea8"/><stop offset="0.6" stop-color="#101c70"/><stop offset="0.88" stop-color="#060c44"/><stop offset="1" stop-color="#2a3a80"/></radialGradient>
<linearGradient id="bg2" x1="0" y1="0" x2="0" y2="1"><stop offset="0" stop-color="#c8d0ff" stop-opacity="0.55"/><stop offset="1" stop-color="#c8d0ff" stop-opacity="0"/></linearGradient>
</defs><circle cx="8" cy="7.8" r="7.3" fill="url(#bg1)"/><ellipse cx="8" cy="4.6" rx="5" ry="3.2" fill="url(#bg2)"/><ellipse cx="8" cy="12.8" rx="4" ry="1.6" fill="#5070d0" opacity="0.45"/><path d="M4.6 4 V11.5" stroke="#fff" stroke-width="1.6"/><path d="M9.2 3.8 L5.6 7.7 L9.2 11.6" stroke="#fff" stroke-width="1.6" fill="none"/><path d="M6.5 7.7 H13" stroke="#fff" stroke-width="1.6"/></svg>
<svg class="a" style="left:428px;top:532px" width="16" height="16" viewBox="0 0 16 16"><circle cx="8" cy="7.8" r="7.3" fill="url(#bg1)"/><ellipse cx="8" cy="4.6" rx="5" ry="3.2" fill="url(#bg2)"/><ellipse cx="8" cy="12.8" rx="4" ry="1.6" fill="#5070d0" opacity="0.45"/><path d="M3.4 7.8 L7.6 4 V11.6 Z M7.4 7.8 L11.8 4 V11.6 Z" fill="#fff"/></svg>
<svg class="a" style="left:699px;top:532px" width="16" height="16" viewBox="0 0 16 16"><circle cx="8" cy="7.8" r="7.3" fill="url(#bg1)"/><ellipse cx="8" cy="4.6" rx="5" ry="3.2" fill="url(#bg2)"/><ellipse cx="8" cy="12.8" rx="4" ry="1.6" fill="#5070d0" opacity="0.45"/><path d="M12.6 7.8 L8.4 4 V11.6 Z M8.6 7.8 L4.2 4 V11.6 Z" fill="#fff"/></svg>
<svg class="a" style="left:765px;top:532px" width="16" height="16" viewBox="0 0 16 16"><circle cx="8" cy="7.8" r="7.3" fill="url(#bg1)"/><ellipse cx="8" cy="4.6" rx="5" ry="3.2" fill="url(#bg2)"/><ellipse cx="8" cy="12.8" rx="4" ry="1.6" fill="#5070d0" opacity="0.45"/><path d="M4.4 4.2 L8.8 7.8 L4.4 11.4 Z" fill="#fff"/><path d="M11 4 V11.6" stroke="#fff" stroke-width="1.6"/></svg>


</body></html>
